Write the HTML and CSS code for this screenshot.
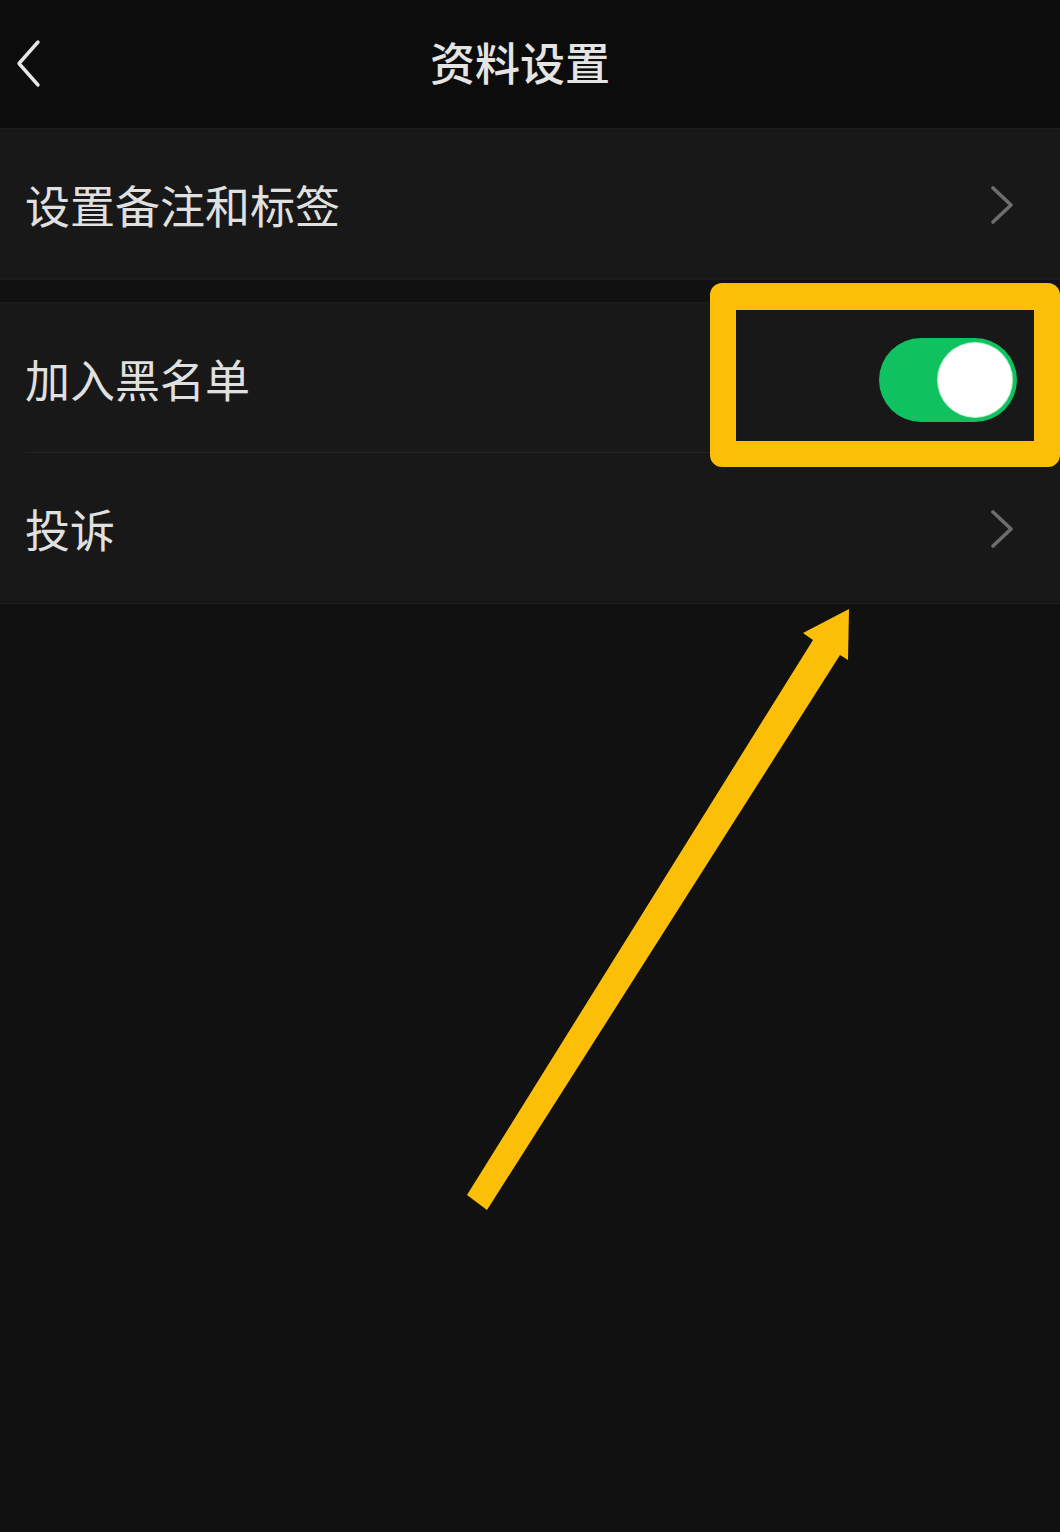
FILE: index.html
```html
<!DOCTYPE html>
<html lang="zh-CN">
<head>
<meta charset="utf-8">
<title>资料设置</title>
<link rel="stylesheet" href="styles.css">
</head>
<body>
<div class="page">
  <header class="topbar">
    <svg class="back" width="30" height="50" viewBox="0 0 30 50"><polyline points="22,3 3,24.5 22,46" fill="none" stroke="#e6e6e6" stroke-width="3.4" stroke-linecap="round" stroke-linejoin="round"/></svg>
    <h1 class="title">资料设置</h1>
  </header>

  <section class="group first">
    <div class="row">
      <span class="label">设置备注和标签</span>
      <svg class="chev" width="24" height="38" viewBox="0 0 24 38"><polyline points="3,2 21,19 3,36" fill="none" stroke="#6d6d6d" stroke-width="3.6" stroke-linecap="round" stroke-linejoin="round"/></svg>
    </div>
  </section>

  <section class="group second">
    <div class="row divided">
      <span class="label">加入黑名单</span>
      <div class="toggle"><div class="knob"></div></div>
    </div>
    <div class="row">
      <span class="label">投诉</span>
      <svg class="chev" width="24" height="38" viewBox="0 0 24 38"><polyline points="3,2 21,19 3,36" fill="none" stroke="#6d6d6d" stroke-width="3.6" stroke-linecap="round" stroke-linejoin="round"/></svg>
    </div>
  </section>

  <div class="highlight"></div>
  <svg class="arrow" width="1060" height="1532" viewBox="0 0 1060 1532">
    <polygon points="467,1195 813,640 803,633 849,609 848,660 840,655 487,1210" fill="#fcbf07"/>
  </svg>
</div>
</body>
</html>
```

FILE: styles.css
```css
html, body {
  margin: 0;
  padding: 0;
  background: #111111;
}
body {
  font-family: "Noto Sans CJK SC", "Noto Sans", sans-serif;
  color: #e2e2e2;
}
.page {
  position: relative;
  width: 1060px;
  height: 1532px;
  overflow: hidden;
  background: #111111;
}
.topbar {
  height: 128px;
  background: #0c0c0c;
  display: flex;
  align-items: center;
  justify-content: center;
  position: relative;
  border-bottom: 1px solid #1d1d1d;
}
.back {
  position: absolute;
  left: 16px;
  top: 39px;
}
.title {
  margin: 0 20px 6px 0;
  font-size: 45px;
  font-weight: 500;
  color: #e4e4e4;
  line-height: 1;
}
.group {
  background: #181818;
}
.group.first {
  border-bottom: 1px solid #1c1c1c;
}
.group.second {
  margin-top: 22px;
  border-top: 1px solid #1c1c1c;
  border-bottom: 1px solid #1e1e1e;
}
.row {
  height: 150px;
  display: flex;
  align-items: center;
  justify-content: space-between;
  padding: 0 46px 0 25px;
  box-sizing: border-box;
  position: relative;
}
.row.divided {
  padding-right: 43px;
}
.row.divided::after {
  content: "";
  position: absolute;
  left: 25px;
  right: 0;
  bottom: 0;
  height: 1px;
  background: #242424;
}
.label {
  font-size: 45px;
  line-height: 1;
  color: #e0e0e0;
  font-weight: 400;
}
.chev {
  display: block;
  margin-top: 2px;
}
.toggle {
  width: 138px;
  height: 84px;
  border-radius: 42px;
  background: #0fc25f;
  position: relative;
  margin-top: 3px;
}
.knob {
  position: absolute;
  right: 5px;
  top: 5px;
  width: 74px;
  height: 74px;
  border-radius: 50%;
  background: #ffffff;
  box-shadow: 0 0 0 1px #b8f0cf;
}
.highlight {
  position: absolute;
  left: 710px;
  top: 283px;
  width: 350px;
  height: 184px;
  box-sizing: border-box;
  border: 26px solid #fcbf07;
  border-top-width: 27px;
  border-radius: 12px;
}
.arrow {
  position: absolute;
  left: 0;
  top: 0;
}
```
